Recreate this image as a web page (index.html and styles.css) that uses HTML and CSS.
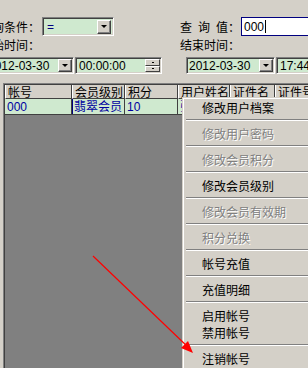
FILE: index.html
```html
<!DOCTYPE html>
<html>
<head>
    <meta charset="UTF-8">
    <title>会员查询</title>
    <link rel="stylesheet" href="styles.css">
</head>
<body>
    <div class="screen">
        <div class="form">
            <div class="field">
                <span class="label">查询条件：</span>
                <div class="combo">
                    <span class="combo-text">=</span>
                    <span class="drop-btn"><i class="tri"></i></span>
                </div>
            </div>
            <div class="field">
                <span class="label">查&ensp;询&ensp;值：</span>
                <div class="textbox">000<span class="caret"></span></div>
            </div>

            <div class="field row2">
                <span class="label">开始时间：</span>
            </div>
            <div class="field row2">
                <span class="label">结束时间：</span>
            </div>

            <div class="field row3 first">
                <div class="datebox">
                    <span class="date-text">2012-03-30</span>
                    <span class="drop-btn"><i class="tri"></i></span>
                </div>
                <div class="timebox">
                    <span class="date-text">00:00:00</span>
                    <span class="spin">
                        <span class="spin-btn"><i class="up"></i></span>
                        <span class="spin-btn"><i class="down"></i></span>
                    </span>
                </div>
            </div>
            <div class="field row3 second">
                <div class="datebox">
                    <span class="date-text">2012-03-30</span>
                    <span class="drop-btn"><i class="tri"></i></span>
                </div>
                <div class="timebox">
                    <span class="date-text">17:44:00</span>
                </div>
            </div>
        </div>

        <div class="grid">
            <div class="grid-row head">
                <div class="cell c1">帐号</div>
                <div class="cell c2">会员级别</div>
                <div class="cell c3">积分</div>
                <div class="cell c4">用户姓名</div>
                <div class="cell c5">证件名</div>
                <div class="cell c6">证件号</div>
            </div>
            <div class="grid-row data">
                <div class="cell c1">000</div>
                <div class="cell c2 current">翡翠会员</div>
                <div class="cell c3">10</div>
                <div class="cell c4">张</div>
                <div class="cell c5"></div>
                <div class="cell c6"></div>
            </div>
        </div>

        <!-- 右键菜单 -->
        <div class="menu">
            <div class="menu-item">修改用户档案</div>
            <div class="menu-sep"></div>
            <div class="menu-item disabled">修改用户密码</div>
            <div class="menu-sep"></div>
            <div class="menu-item disabled">修改会员积分</div>
            <div class="menu-sep"></div>
            <div class="menu-item">修改会员级别</div>
            <div class="menu-sep"></div>
            <div class="menu-item disabled">修改会员有效期</div>
            <div class="menu-sep"></div>
            <div class="menu-item disabled">积分兑换</div>
            <div class="menu-sep"></div>
            <div class="menu-item">帐号充值</div>
            <div class="menu-sep"></div>
            <div class="menu-item">充值明细</div>
            <div class="menu-sep"></div>
            <div class="menu-item">启用帐号</div>
            <div class="menu-item">禁用帐号</div>
            <div class="menu-sep"></div>
            <div class="menu-item">注销帐号</div>
        </div>

        <svg class="arrow" width="308" height="368" viewBox="0 0 308 368">
            <line x1="93" y1="256" x2="189" y2="348" stroke="#ff0000" stroke-width="1.2"/>
            <polygon points="193,353 181,348 188,341" fill="#ff0000"/>
        </svg>
    </div>
</body>
</html>
```

FILE: styles.css
```css
* {
    margin: 0;
    padding: 0;
    box-sizing: border-box;
}

body {
    font-family: "Noto Sans CJK SC", "Liberation Sans", sans-serif;
    font-size: 12px;
    background: #d4d0c8;
    color: #000;
}

.screen {
    position: relative;
    width: 308px;
    height: 368px;
    overflow: hidden;
    background: #d4d0c8;
}

/* 查询表单 */
.form {
    display: grid;
    grid-template-columns: 200px 148px;
    margin-left: -20px;
    padding-top: 17px;
}

.field {
    display: flex;
    align-items: center;
    gap: 2px;
    height: 19px;
}

.label {
    flex: none;
    width: 60px;
    line-height: 14px;
    white-space: nowrap;
}

.row2 {
    height: 14px;
    margin-top: 2px;
}

.row3 {
    height: 17px;
    margin-top: 5px;
    gap: 1px;
}

.row3.first {
    padding-left: 5px;
}

.row3.second {
    padding-left: 6px;
}

.combo,
.datebox,
.timebox {
    flex: none;
    display: flex;
    align-items: center;
    background: #cfe9cf;
    border-top: 1px solid #808080;
    border-left: 1px solid #808080;
    border-right: 1px solid #fff;
    border-bottom: 1px solid #fff;
    box-shadow: inset 1px 1px 0 #404040, inset -1px -1px 0 #d4d0c8;
}

.combo {
    width: 72px;
    height: 19px;
    padding: 0 2px 0 4px;
}

.combo-text {
    flex: 1;
    color: #000080;
    font-family: "Liberation Sans", sans-serif;
    font-size: 12px;
}

.datebox {
    width: 89px;
    height: 17px;
    padding: 0 1px 0 2px;
}

.timebox {
    width: 87px;
    height: 17px;
    padding: 0 1px 0 3px;
}

.date-text {
    flex: 1;
    font-family: "Liberation Sans", sans-serif;
    font-size: 12px;
    white-space: nowrap;
}

.drop-btn {
    flex: none;
    display: flex;
    align-items: center;
    justify-content: center;
    width: 14px;
    height: 14px;
    background: #d4d0c8;
    border-top: 1px solid #fff;
    border-left: 1px solid #fff;
    border-right: 1px solid #404040;
    border-bottom: 1px solid #404040;
    box-shadow: inset -1px -1px 0 #808080;
}

.datebox .drop-btn {
    height: 13px;
}

.tri {
    width: 0;
    height: 0;
    border-left: 3px solid transparent;
    border-right: 3px solid transparent;
    border-top: 3px solid #000;
}

.spin {
    flex: none;
    display: flex;
    flex-direction: column;
    width: 15px;
    height: 13px;
}

.spin-btn {
    flex: 1;
    display: flex;
    align-items: center;
    justify-content: center;
    background: #d4d0c8;
    border-top: 1px solid #fff;
    border-left: 1px solid #fff;
    border-right: 1px solid #404040;
    border-bottom: 1px solid #404040;
}

.spin-btn i {
    width: 2px;
    height: 1px;
    background: #000;
}

.textbox {
    flex: none;
    display: flex;
    align-items: center;
    width: 80px;
    height: 19px;
    margin-left: -1px;
    padding-left: 2px;
    background: #fff;
    border: 1px solid #000080;
    border-right: none;
    font-family: "Liberation Sans", sans-serif;
    font-size: 12px;
}

.caret {
    width: 1px;
    height: 13px;
    margin-left: 1px;
    background: #000;
}

/* 数据表格 */
.grid {
    margin: 9px 0 0 3px;
    height: 300px;
    background: #808080;
    border-top: 1px solid #808080;
    border-left: 1px solid #808080;
    box-shadow: inset 1px 1px 0 #404040;
    padding: 1px 0 0 1px;
}

.grid-row {
    display: flex;
}

.cell {
    flex: none;
    height: 14px;
    line-height: 13px;
    padding-left: 2px;
    white-space: nowrap;
    overflow: hidden;
}

.head .cell {
    background: #d4d0c8;
    border-left: 1px solid #fff;
    border-right: 1px solid #404040;
    border-bottom: 1px solid #404040;
}

.data .cell {
    height: 16px;
    line-height: 16px;
    background: #cfe9cf;
    color: #0000a0;
    border-right: 1px solid #404040;
    border-bottom: 1px solid #404040;
    font-family: "Liberation Sans", "Noto Sans CJK SC", sans-serif;
}

.data .current {
    box-shadow: inset 1px 0 0 #000080;
}

.c1 { width: 67px; }
.c2 { width: 53px; }
.c3 { width: 53px; }
.c4 { width: 52px; }
.c5 { width: 45px; }
.c6 { width: 60px; }

/* 右键菜单 */
.menu {
    position: absolute;
    left: 182px;
    top: 97px;
    width: 140px;
    padding: 0 0 4px 0;
    background: #d4d0c8;
    border-top: 1px solid #d4d0c8;
    border-left: 1px solid #d4d0c8;
    box-shadow: inset 1px 1px 0 #fff;
}

.menu-item {
    height: 17px;
    line-height: 17px;
    padding-left: 19px;
    margin-top: 1px;
    white-space: nowrap;
}

.menu-item + .menu-item {
    margin-top: 0;
}

.menu-item.disabled {
    color: #808080;
    text-shadow: 1px 1px 0 #fff;
}

.menu-sep {
    height: 9px;
    margin-left: 3px;
    margin-top: -1px;
    padding-top: 4px;
}

.menu-sep::before {
    content: "";
    display: block;
    height: 1px;
    background: #808080;
    border-bottom: 1px solid #fff;
    box-sizing: content-box;
}

.arrow {
    position: absolute;
    left: 0;
    top: 0;
    pointer-events: none;
}
```
